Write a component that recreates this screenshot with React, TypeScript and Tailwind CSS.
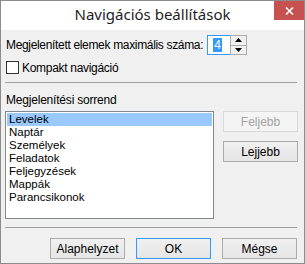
import React from "react";

const items = [
  "Levelek",
  "Naptár",
  "Személyek",
  "Feladatok",
  "Feljegyzések",
  "Mappák",
  "Parancsikonok",
];

export default function App() {
  return (
    <div
      className="w-[305px] h-[264px] bg-[#f0f0f0] border border-[#8c8c8c] flex flex-col text-[12px] text-black"
      style={{ fontFamily: '"Liberation Sans", Arial, sans-serif' }}
    >
      {/* Title bar */}
      <div className="relative h-[29px] bg-white flex items-center justify-center shrink-0">
        <span className="text-[15px] text-[#1e1e1e] leading-none pb-[2px]" style={{ fontFamily: '"Noto Sans", sans-serif' }}>
          Navigációs beállítások
        </span>
        <div className="absolute top-0 right-0 w-[30px] h-[19px] bg-[#c75050] flex items-center justify-center">
          <svg width="9" height="8" viewBox="0 0 9 8">
            <path d="M1 0.5 L8 7.5 M8 0.5 L1 7.5" stroke="white" strokeWidth="1.6" />
          </svg>
        </div>
      </div>

      <div className="flex flex-col px-[4px] pt-[5px]">
        {/* Max items row */}
        <div className="flex items-center h-[20px]">
          <span className="leading-none pl-[1px] tracking-[-0.33px]">Megjelenített elemek maximális száma:</span>
          <div className="ml-[4px] flex h-[20px] w-[40px]">
            <div className="flex-1 border border-[#3399ff] border-r-0 bg-white flex items-center pl-[5px]">
              <span className="bg-[#3399ff] text-white leading-[14px] px-[1px]">4</span>
            </div>
            <div className="w-[17px] border border-[#acacac] flex flex-col bg-[#f0f0f0]">
              <div className="flex-1 flex items-center justify-center border-b border-[#acacac]">
                <svg width="7" height="4" viewBox="0 0 7 4">
                  <path d="M3.5 0 L7 4 L0 4 Z" fill="#000" />
                </svg>
              </div>
              <div className="flex-1 flex items-center justify-center">
                <svg width="7" height="4" viewBox="0 0 7 4">
                  <path d="M0 0 L7 0 L3.5 4 Z" fill="#000" />
                </svg>
              </div>
            </div>
          </div>
        </div>

        {/* Compact checkbox */}
        <div className="flex items-center mt-[6px] pl-[1px]">
          <div className="w-[13px] h-[13px] border border-[#333] bg-white" />
          <span className="ml-[3px] leading-none tracking-[-0.3px]">Kompakt navigáció</span>
        </div>

        <div className="mt-[8px] h-[1px] bg-[#a0a0a0] mr-[3px]" />

        <div className="mt-[11px] pl-[1px] leading-none tracking-[-0.2px]">Megjelenítési sorrend</div>

        {/* List + move buttons */}
        <div className="flex mt-[5px]">
          <div className="w-[209px] h-[108px] border border-[#828790] bg-white p-[1px] text-[11.5px]">
            {items.map((item, i) => (
              <div
                key={item}
                className={`h-[13px] leading-[13px] pl-[2px] ${i === 0 ? "bg-[#99c9ff]" : ""}`}
              >
                {item}
              </div>
            ))}
          </div>
          <div className="ml-[9px] flex flex-col gap-[9px]">
            <div className="w-[75px] h-[21px] border border-[#d9d9d9] bg-[#f4f4f4] text-[#a3a3a3] flex items-center justify-center">
              Feljebb
            </div>
            <div className="w-[75px] h-[21px] border border-[#acacac] bg-gradient-to-b from-[#f0f0f0] to-[#e5e5e5] flex items-center justify-center">
              Lejjebb
            </div>
          </div>
        </div>

        <div className="mt-[8px] h-[1px] bg-[#a0a0a0] mr-[3px]" />

        {/* Bottom buttons */}
        <div className="flex justify-end gap-[11px] mt-[10px] pr-[3px]">
          <div className="w-[75px] h-[21px] border border-[#acacac] bg-gradient-to-b from-[#f0f0f0] to-[#e5e5e5] flex items-center justify-center">
            Alaphelyzet
          </div>
          <div className="w-[75px] h-[21px] border border-[#3399ff] bg-gradient-to-b from-[#f0f0f0] to-[#e5e5e5] flex items-center justify-center">
            OK
          </div>
          <div className="w-[75px] h-[21px] border border-[#acacac] bg-gradient-to-b from-[#f0f0f0] to-[#e5e5e5] flex items-center justify-center">
            Mégse
          </div>
        </div>
      </div>
    </div>
  );
}
